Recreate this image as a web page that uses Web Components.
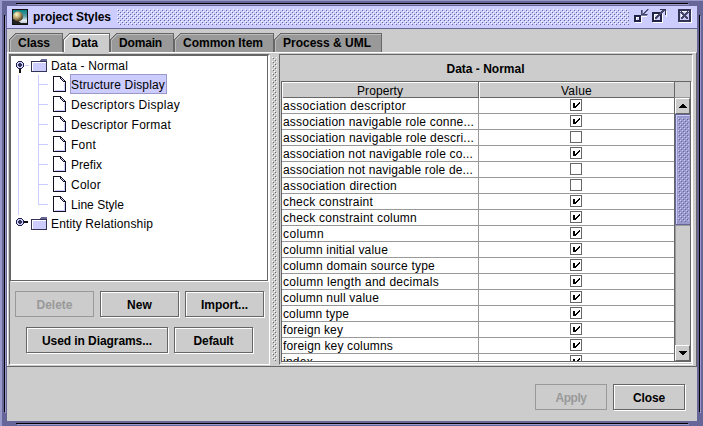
<!DOCTYPE html>
<html lang="en"><head><meta charset="utf-8"><title>project Styles</title>
<style>html,body{margin:0;width:703px;height:426px;overflow:hidden;background:#ccc}</style></head>
<body><styles-window></styles-window>
<script>
const define=(name,css,html,ready)=>customElements.define(name,class extends HTMLElement{
 connectedCallback(){ if(this.shadowRoot)return;
  const r=this.attachShadow({mode:'open'});
  r.innerHTML='<style>*{box-sizing:border-box}'+css+'</style>'+(typeof html==='function'?html(this):html);
  if(ready)ready(this,r);
 }});

/* Text run whose letter spacing is tuned to a given advance width */
define('fit-text',`:host{display:block;white-space:pre;flex:none}span{display:inline-block}`,
 e=>`<span>${e.getAttribute('t').replace(/&/g,'&amp;')}</span>`,
 (e,r)=>{const s=r.querySelector('span'),w=+e.getAttribute('w');
  if(w){const n=e.getAttribute('t').length;s.style.letterSpacing=((w-s.getBoundingClientRect().width)/n)+'px';}});

define('metal-button',`:host{display:flex;align-items:center;justify-content:center;box-sizing:border-box;height:26px;font-weight:bold;flex:none;
 border:1px solid #666;box-shadow:inset 1px 1px #fff,1px 1px #fff;margin-right:1px;padding-top:1px}
 :host([disabled]){color:#999;border-color:#999;box-shadow:none}`,
 e=>`<fit-text t="${e.getAttribute('t')}" w="${e.getAttribute('w')}"></fit-text>`);

define('tab-item',`:host{display:block;height:19px;flex:none;position:relative;font-weight:bold}
 svg{display:block;position:absolute;left:0;top:0}
 fit-text{position:absolute;left:9px;top:3px}`,
 e=>{const w=+e.getAttribute('width'),sel=e.hasAttribute('selected');
 return `<svg width="${w}" height="20" shape-rendering="crispEdges"><path d="M0 20V6L6 0H${w}V20Z" fill="${sel?'#ccc':'#999'}"/>
 <path d="M.5 20V6.5L6.5 .5H${w-.5}V20" fill="none" stroke="#666"/>
 <path d="M1.5 20V7.5L7.5 1.5H${w-1}" fill="none" stroke="${sel?'#fff':'#bbb'}"/></svg><fit-text t="${e.getAttribute('t')}" w="${e.getAttribute('tw')}"></fit-text>`});

define('title-bar',`:host{display:flex;height:23px;background:#ccf;border-bottom:1px solid #669;padding:3px 4px 0 5px;font-weight:bold}
 .ico{flex:none;width:16px;height:16px}fit-text{margin:0 0 0 5px;padding-top:1px;width:84px}
 .d{width:512px;height:16px;flex:none}.w{flex:none;margin-left:3px}`,
 `<svg class="ico" viewBox="0 0 16 16"><defs><linearGradient id="s" x2="0" y2="1"><stop stop-color="#087f7f"/><stop offset=".45" stop-color="#5aa0a8"/><stop offset=".75" stop-color="#e8eef2"/><stop offset="1" stop-color="#a9b9c9"/></linearGradient>
 <radialGradient id="b" cx=".36" cy=".3" r=".7"><stop stop-color="#fffbd0"/><stop offset=".45" stop-color="#c3ad76"/><stop offset="1" stop-color="#4c3c20"/></radialGradient></defs>
 <path fill="#111" d="M0 0H16V16H0Z"/><path fill="url(#s)" d="M1 1H15V15H1Z"/><path d="M1 10H4L9 14H15V15H1Z" fill="#222"/><circle cx="6" cy="7.5" r="5" fill="url(#b)"/></svg>
 <fit-text t="project Styles" w="78"></fit-text>
 <svg class="d" shape-rendering="crispEdges"><defs><pattern id="p" width="4" height="4" patternUnits="userSpaceOnUse"><path fill="#fff" d="M0 0h1v1H0zM2 2h1v1H2z"/><path fill="#669" d="M1 1h1v1H1zM3 3h1v1H3z"/></pattern></defs><rect width="512" height="16" fill="url(#p)"/></svg>
 <svg class="w" width="62" height="16" shape-rendering="crispEdges">
 <g fill="none">
 <path d="M3 13.500h6.500v-6.500M9 7.500h6M4 11v-2.500h3" stroke="#fff"/><path d="M3 7h5v5h-5z" stroke="#224" stroke-width="2"/>
 <path d="M9 1h1v4h1V4h1V3h1V2h1V1h1V0h1v1h-1v1h-1v1h-1v1h-1v1h3v1H9z" fill="#446" stroke="#446" stroke-width=".6"/>
 <path d="M21 13.500h9.500v-8.500M22.500 11V5.500h5M34.500 2v6" stroke="#fff"/><path d="M21 4h8v8h-8z" stroke="#224" stroke-width="2"/><path d="M23 10l9-9" stroke="#446" stroke-width="2"/><path d="M28 .5h6M33.500 0v6" stroke="#335"/>
 <path d="M47 13.500h12.500V1" stroke="#fff"/><path d="M47 1h11v11H47z" stroke="#335" stroke-width="2"/><path d="M49 10V2.500h7" stroke="#fff"/><path d="M49 3l7 7M56 3l-7 7" stroke="#446" stroke-width="2"/></g></svg>`);

const handle=open=>`<svg width="14" height="13" viewBox="0 0 14 13" shape-rendering="crispEdges"><g ${open?'':'transform="rotate(-90 4.5 4.5)"'}><path d="M4 8h2v5H4z" fill="#111"/><path d="M3 1h4v1h1v1h1v4H8v1H7v1H3V8H2V7H1V3h1V2h1z" fill="#224"/><path d="M3 2h4v1h1v4H7v1H3V7H2V3h1z" fill="#ccf"/><path d="M4 3h2v1h1v2H6v1H4V6H3V4h1z" fill="#335"/></g>${open?'<path d="M10 5h4v1h-4z" fill="#ccf"/>':''}</svg>`;
const folder=`<svg width="17" height="14" shape-rendering="crispEdges"><path d="M0 2h9V1h1V0h6v13H0z" fill="#335"/><path d="M10 0h6v2H9V1h1z" fill="#669"/><path d="M1 3h14v9H1z" fill="#ccf"/><path d="M1 3h14v1H2v8H1z" fill="#fff"/></svg>`;
const sheet=`<svg width="13" height="16" shape-rendering="crispEdges"><path d="M0 0h8v1h1v1h1v1h1v1h1v1h1v11H0z" fill="#112"/><path d="M1 1h6v2h1v1h1v1h1v1h2v9H1z" fill="#fff"/><path d="M2 14h10v1H2zM11 7h1v8h-1z" fill="#ccf"/><path d="M8 2h1v1H8zM9 3h1v1H9zM10 4h1v1h-1z" fill="#ccf"/></svg>`;

define('tree-branch',`:host{display:flex;height:18px;align-items:center;padding-left:4px}
 svg{flex:none}.h{width:12px;margin-right:4px;display:flex}fit-text{margin-left:4px}`,
 e=>`<span class="h">${handle(e.hasAttribute('open'))}</span>${folder}<fit-text style="margin-left:3px" t="${e.getAttribute('t')}" w="${e.getAttribute('w')}"></fit-text>`);
define('tree-leaf',`:host{display:flex;height:20px}
 .g{width:42px;flex:none;background:linear-gradient(#ccf,#ccf) 7px 0/1px 20px no-repeat,linear-gradient(#ccf,#ccf) 27px 0/1px 20px no-repeat,linear-gradient(#ccf,#ccf) 27px 9px/10px 1px no-repeat}
 :host([last]) .g{background-size:1px 20px,1px 10px,10px 1px}
 svg{margin-top:1px;flex:none}.l{height:20px;margin-left:4px;margin-top:-1px;padding:3px 1px 0 0;border:1px solid transparent;line-height:14px}
 :host([selected]) .l{background:#ccf;border-color:#99c}`,
 e=>`<div class="g"></div>${sheet}<div class="l"><fit-text t="${e.getAttribute('t')}" w="${e.getAttribute('w')}"></fit-text></div>`);

define('check-box',`:host{display:block;width:12px;height:12px;flex:none}svg{display:block}`,
 e=>`<svg width="12" height="12" shape-rendering="crispEdges"><path d="M.5 .5h11v11H.5z" stroke="#666" fill="#fff"/>
 ${e.hasAttribute('checked')?'<path fill="#000" d="M3 4h2v3h1V6h1V5h1V4h1V3h1v2H9v1H8v1H7v1H6v1H3z"/>':''}</svg>`);
define('table-row',`:host{display:grid;grid-template-columns:196px 1px 195px;height:16px;border-bottom:1px solid #999;box-sizing:border-box;background:#fff;flex:none}
 .n{padding:1px 0 0 1px;line-height:15px}.v{background:#999}.c{display:flex;padding:1px 0 0 91px}`,
 e=>`<div class="n"><fit-text t="${e.getAttribute('t')}" w="${e.getAttribute('w')}"></fit-text></div><div class="v"></div><div class="c"><check-box ${e.hasAttribute('checked')?'checked':''}></check-box></div>`);

define('scroll-bar',`:host{display:flex;flex-direction:column;width:16px;background:#ccc;border-left:1px solid #666}
 .b{height:16px;display:flex;align-items:center;justify-content:center;border:1px solid #fff;border-right-color:#666;border-bottom-color:#666;flex:none}
 .t{height:111px;background:#99c;border:1px solid #669;border-right:0;box-shadow:inset 1px 1px #ccf;padding:3px 2px;flex:none}.f{flex:1;border-left:1px solid #999;border-top:1px solid #999}`,
 `<div class="b"><svg width="8" height="4" shape-rendering="crispEdges"><path d="M3 0h2v1h1v1h1v1h1v1H0V3h1V2h1V1h1z"/></svg></div>
 <div class="t"><svg width="11" height="104" style="display:block" shape-rendering="crispEdges"><defs><pattern id="q" width="4" height="4" patternUnits="userSpaceOnUse"><path fill="#ccf" d="M0 0h1v1H0zM2 2h1v1H2z"/><path fill="#669" d="M1 1h1v1H1zM3 3h1v1H3z"/></pattern></defs><rect width="11" height="104" fill="url(#q)"/></svg></div>
 <div class="f"></div><div class="b"><svg width="8" height="4" shape-rendering="crispEdges"><path d="M0 0h8v1H7v1H6v1H5v1H3V3H2V2H1V1H0z"/></svg></div>`);

define('property-table',`:host{display:grid;grid-template-columns:392px 16px;grid-template-rows:16px 263px;border:1px solid #666;width:410px;height:281px;box-sizing:border-box;box-shadow:1px 1px #fff}
 .h{display:grid;grid-template-columns:197px 195px;border-bottom:1px solid #666;line-height:18px}
 .h div{display:flex;justify-content:center;box-shadow:inset 1px 1px #fff;border-right:1px solid #666}.h div:last-child{border:0}
 .k{border-left:1px solid #666;border-bottom:1px solid #999}.rows{display:flex;flex-direction:column;overflow:hidden;background:#fff}`,
 ()=>`<div class="h"><div><fit-text t="Property" w="46"></fit-text></div><div><fit-text t="Value" w="31"></fit-text></div></div><div class="k"></div><div class="rows">`+
 [['association descriptor',123,1],['association navigable role conne...',191,1],['association navigable role descri...',191,0],['association not navigable role co...',190,1],['association not navigable role de...',190,0],['association direction',114,0],['check constraint',90,1],['check constraint column',134,1],['column',41,1],['column initial value',105,1],['column domain source type',152,1],['column length and decimals',156,1],['column null value',96,1],['column type',66,1],['foreign key',60,1],['foreign key columns',110,1],['index',30,1]]
 .map(([t,w,c])=>`<table-row t="${t}" w="${w}" ${c?'checked':''}></table-row>`).join('')+`</div><scroll-bar></scroll-bar>`);

define('styles-window',`:host{display:block;width:703px;height:426px;box-sizing:border-box;padding:6px 6px 5px 7px;font:12px/14px "Liberation Sans",Arial,sans-serif;color:#000;
 background:
 linear-gradient(#000,#000) 16px 3px/672px 1px no-repeat,linear-gradient(#99c,#99c) 17px 4px/672px 1px no-repeat,
 linear-gradient(#000,#000) 4px 15px/1px 397px no-repeat,linear-gradient(#99c,#99c) 5px 16px/1px 397px no-repeat,
 linear-gradient(#000,#000) 699px 15px/1px 397px no-repeat,linear-gradient(#99c,#99c) 700px 16px/1px 397px no-repeat,
 linear-gradient(#000,#000) 16px 423px/672px 1px no-repeat,linear-gradient(#99c,#99c) 17px 424px/672px 1px no-repeat,
 linear-gradient(#99c,#99c) 0 0/703px 1px no-repeat,linear-gradient(#99c,#99c) 0 0/2px 426px no-repeat,#669}
 .tabs{display:flex;height:23px;padding:4px 0 0 2px;background:#ccc}
 .pane{display:grid;grid-template-columns:262px 8px 417px;height:314px;background:#ccc;border:1px solid #fff;border-right:1px solid #666;border-bottom:0;padding-top:1px;position:relative}
 .gap{position:absolute;left:55px;top:-1px;width:46px;height:1px;background:#ccc}
 .left{height:311px;border:1px solid #fff;border-top:1px solid #666;border-left:1px solid #666;display:flex;flex-direction:column;margin-left:1px}
 .tree{height:226px;flex:none;border:1px solid #666;box-shadow:1px 1px #fff;background:#fff;padding-top:1px;margin-right:1px;position:relative}
 .r{display:flex;height:26px;flex:none}.r metal-button+metal-button{margin-left:5px}
 .right{height:311px;border:1px solid #666;border-bottom-color:#fff;border-right-color:#fff;padding-left:1px;margin-right:2px;margin-left:1px}
 .title{height:26px;display:flex;justify-content:center;align-items:center;font-weight:bold;padding:2px 2px 0 0}
 .foot{height:55px;background:#ccc;border-top:1px solid #666;display:flex;justify-content:flex-end;gap:5px;padding:17px 11px 0 0}`,
 ()=>`<title-bar></title-bar><div class="tabs">
 <tab-item t="Class" width="54" tw="32" style="width:54px"></tab-item><tab-item selected t="Data" width="47" tw="26" style="width:47px"></tab-item><tab-item t="Domain" width="64" tw="43" style="width:64px"></tab-item><tab-item t="Common Item" width="100" tw="80" style="width:100px"></tab-item><tab-item t="Process &amp;amp; UML" width="108" tw="88" style="width:108px"></tab-item></div>
 <div class="pane"><div class="gap"></div><div class="left"><div class="tree"><tree-branch open t="Data - Normal" w="77"></tree-branch>`+
 [['Structure Display',94],['Descriptors Display',109],['Descriptor Format',100],['Font',25],['Prefix',31],['Color',30],['Line Style',53]].map(([t,w],i)=>`<tree-leaf t="${t}" w="${w}" ${i==0?'selected':''} ${i==6?'last':''}></tree-leaf>`).join('')+
 `<tree-branch t="Entity Relationship" w="102"></tree-branch></div>
 <div class="r" style="padding-left:5px;margin-top:10px"><metal-button disabled t="Delete" w="36" style="width:79px"></metal-button><metal-button t="New" w="25" style="width:79px"></metal-button><metal-button t="Import..." w="47" style="width:79px"></metal-button></div>
 <div class="r" style="padding-left:16px;margin-top:10px"><metal-button t="Used in Diagrams..." w="110" style="width:142px"></metal-button><metal-button t="Default" w="40" style="width:79px"></metal-button></div></div>
 <svg width="8" height="311" shape-rendering="crispEdges"><defs><pattern id="z" width="4" height="4" patternUnits="userSpaceOnUse"><path fill="#fff" d="M0 0h1v1H0zM2 2h1v1H2z"/><path fill="#666" d="M1 1h1v1H1zM3 3h1v1H3z"/></pattern></defs><g transform="translate(2 3)"><rect width="5" height="304" fill="url(#z)"/></g></svg>
 <div class="right"><div class="title"><fit-text t="Data - Normal" w="78"></fit-text></div><property-table></property-table></div></div>
 <div class="foot"><metal-button disabled t="Apply" w="31" style="width:72px"></metal-button><metal-button t="Close" w="32" style="width:72px"></metal-button></div>`);
</script></body></html>
